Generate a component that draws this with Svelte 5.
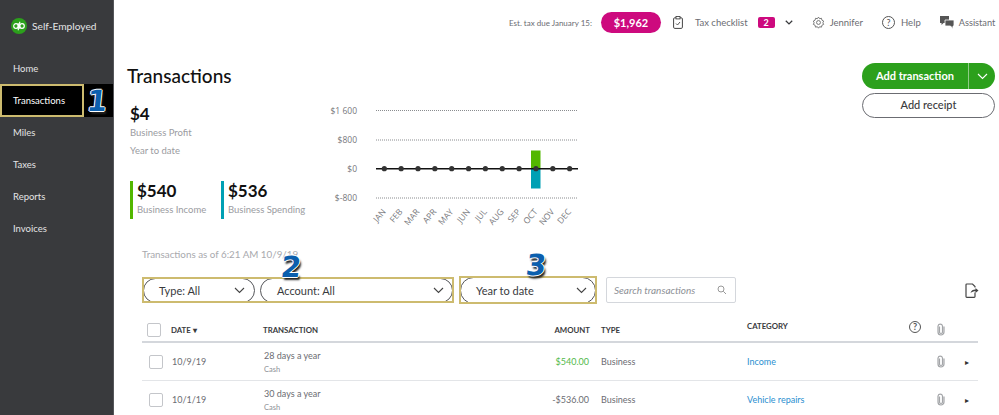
<script>
  const nav = ['Home', 'Transactions', 'Miles', 'Taxes', 'Reports', 'Invoices'];
  const months = ['JAN', 'FEB', 'MAR', 'APR', 'MAY', 'JUN', 'JUL', 'AUG', 'SEP', 'OCT', 'NOV', 'DEC'];
  const gridLines = [
    { label: '$1 600', y: 20.5 },
    { label: '$800', y: 50 },
    { label: '$-800', y: 108 }
  ];
  const rows = [
    { date: '10/9/19', name: '28 days a year', amount: '$540.00', income: true, category: 'Income' },
    { date: '10/1/19', name: '30 days a year', amount: '-$536.00', income: false, category: 'Vehicle repairs' }
  ];
  const monthX = (i) => 64.3 + i * 16.85;
</script>

{#snippet chevron(color = '#444', width = 1.1)}
  <svg class="chev" width="11" height="7" viewBox="0 0 11 7"><path d="M1 1l4.500 4.500L10 1" fill="none" stroke={color} stroke-width={width} /></svg>
{/snippet}

{#snippet clip()}
  <svg width="8" height="13" viewBox="0 0 8 13"><path d="M2.500 3.500v5.500a1.500 1.500 0 0 0 3 0V3a2.300 2.300 0 0 0-4.500 0v6a3 3 0 0 0 6 0V3.500" fill="none" stroke="#a3a5a8" stroke-width="1.200" /></svg>
{/snippet}

<div class="page">
  <aside class="sidebar">
    <div class="brand">
      <svg width="16" height="16" viewBox="0 0 16 16">
        <circle cx="8" cy="8" r="8" fill="#2ca01c" />
        <g fill="none" stroke="#fff" stroke-width="1.200">
          <circle cx="5" cy="8" r="2.300" />
          <path d="M7.300 5.200V12.200" />
          <circle cx="11" cy="8" r="2.300" />
          <path d="M8.700 3.800V10.800" />
        </g>
      </svg>
      <span>Self-Employed</span>
    </div>
    <nav>
      {#each nav as item}
        {#if item === 'Transactions'}
          <div class="nav-active">
            <a href="#top" class="nav-item boxed">{item}</a>
            <span class="marker one">1</span>
          </div>
        {:else}
          <a href="#top" class="nav-item">{item}</a>
        {/if}
      {/each}
    </nav>
  </aside>

  <main>
    <header class="topbar">
      <span class="due">Est. tax due January 15:</span>
      <span class="tax-pill">$1,962</span>
      <svg class="board" width="10" height="13" viewBox="0 0 10 13"><rect x="0.600" y="1.800" width="8.800" height="10.600" rx="1.200" fill="none" stroke="#444" /><rect x="3" y="0.500" width="4" height="2.400" fill="#fff" stroke="#444" stroke-width="0.900" /><path d="M3 7.500l1.500 1.500 2.500-3" fill="none" stroke="#444" stroke-width="0.900" /></svg>
      <span class="link check">Tax checklist</span>
      <span class="badge">2</span>
      <span class="top-chev">{@render chevron('#393a3d', 1.800)}</span>
      <svg class="gear" width="13" height="13" viewBox="0 0 24 24"><path d="M12 2l2 3 3.500-.8.8 3.500 3.200 1.600-1.400 3.200 1.400 3-3.200 1.600-.8 3.500-3.500-.8-2 2.700-2-2.700-3.500.8-.8-3.500-3.200-1.600 1.400-3-1.400-3.200 3.200-1.600.8-3.500 3.500.8z" fill="none" stroke="#666" stroke-width="1.600" /><circle cx="12" cy="12" r="3.600" fill="none" stroke="#666" stroke-width="1.600" /></svg>
      <span class="link name">Jennifer</span>
      <span class="round-help">?</span>
      <span class="link help">Help</span>
      <svg class="chat" width="14" height="13" viewBox="0 0 14 13"><path d="M0 0h9v7H3.500L1.500 9V7H0z" fill="#555" /><path d="M5 4h9v6h-1v2.500L10.500 10H5z" fill="#555" stroke="#fff" stroke-width="0.800" /></svg>
      <span class="link assistant">Assistant</span>
    </header>

    <section class="hero">
      <div class="summary">
        <h1>Transactions</h1>
        <div class="profit">
          <strong>$4</strong>
          <small>Business Profit</small>
          <small>Year to date</small>
        </div>
        <div class="stats">
          <div class="stat income">
            <strong>$540</strong>
            <small>Business Income</small>
          </div>
          <div class="stat spending">
            <strong>$536</strong>
            <small>Business Spending</small>
          </div>
        </div>
      </div>

      <svg class="chart" width="270" height="148" viewBox="0 0 270 148">
        {#each gridLines as line}
          <line x1="56" x2="257" y1={line.y} y2={line.y} stroke="#8a8c8f" stroke-width="1" stroke-dasharray="1 1" />
          <text x="37" y={line.y + 3} text-anchor="end" class="axis">{line.label}</text>
        {/each}
        <text x="37" y="81.500" text-anchor="end" class="axis">$0</text>
        <rect x="211" y="60.500" width="9.500" height="18" fill="#53b700" />
        <rect x="211" y="78.500" width="9.500" height="20" fill="#00a0b4" />
        <line x1="56" x2="258" y1="78.700" y2="78.700" stroke="#111" stroke-width="1.500" />
        {#each months as month, i}
          <circle cx={monthX(i)} cy="78.700" r="2.600" fill="#333" />
          <text class="axis month" text-anchor="end" transform="translate({monthX(i) + 2} 122) rotate(-50)">{month}</text>
        {/each}
      </svg>

      <div class="actions">
        <div class="split">
          <span class="split-main">Add transaction</span>
          <span class="split-caret">{@render chevron('#fff')}</span>
        </div>
        <div class="receipt">Add receipt</div>
      </div>
    </section>

    <p class="asof">Transactions as of 6:21 AM 10/9/19</p>

    <div class="filters">
      <div class="gold first">
        <span class="select type"><span>Type: All</span>{@render chevron()}</span>
        <span class="select account"><span>Account: All</span>{@render chevron()}</span>
        <span class="marker two">2</span>
      </div>
      <div class="gold second">
        <span class="select year"><span>Year to date</span>{@render chevron()}</span>
        <span class="marker three">3</span>
      </div>
      <div class="search">
        <span>Search transactions</span>
        <svg width="10" height="10" viewBox="0 0 10 10"><circle cx="4" cy="4" r="3" fill="none" stroke="#999" /><path d="M6.300 6.300L9 9" stroke="#999" /></svg>
      </div>
      <svg class="export" width="14" height="15" viewBox="0 0 14 15"><path d="M10 9.500V13.500a.8.8 0 0 1-.8.8H1.800a.8.800 0 0 1-.8-.8V1.800a.8.800 0 0 1 .8-.8h5.700L10 3.500v1" fill="none" stroke="#444" stroke-width="1.200" /><path d="M5.500 10c.5-2.500 2.500-3.500 5-3.500V5l3 2.500-3 2.500V8.200c-2 0-3.500.5-5 1.800z" fill="#444" /></svg>
    </div>

    <div class="table">
      <div class="row head">
        <span class="box hbox"></span>
        <span class="date">DATE <i>▾</i></span>
        <span>TRANSACTION</span>
        <span class="amount">AMOUNT</span>
        <span class="type-col">TYPE</span>
        <span class="cat-col">CATEGORY</span>
        <span class="round-help small">?</span>
        <span class="clip-col">{@render clip()}</span>
        <span></span>
      </div>
      {#each rows as row}
        <div class="row item">
          <span class="box"></span>
          <span class="date">{row.date}</span>
          <span class="desc">{row.name}<small>Cash</small></span>
          <span class="amount" class:positive={row.income}>{row.amount}</span>
          <span class="type-col">Business</span>
          <a href="#top" class="cat-link">{row.category}</a>
          <span></span>
          <span class="clip-col">{@render clip()}</span>
          <span class="caret">▸</span>
        </div>
      {/each}
    </div>
  </main>
</div>

<style>
  :global(body) {
    margin: 0;
    background: #fff;
    font-family: Lato, "Open Sans", sans-serif;
    color: #393a3d;
  }

  .page {
    display: flex;
    width: 999px;
    height: 415px;
    overflow: hidden;
  }

  .sidebar {
    flex: 0 0 113px;
    background: #393a3d;
    border-right: 1px solid #55565a;
    color: #e4e4e5;
  }

  .brand {
    display: flex;
    align-items: center;
    gap: 5px;
    height: 16px;
    padding: 18px 0 0 11px;
    font-size: 10.200px;
  }

  nav {
    display: flex;
    flex-direction: column;
    margin-top: 18px;
  }

  .nav-item {
    display: flex;
    align-items: center;
    height: 32px;
    padding-left: 13px;
    font-size: 9.500px;
    color: #e4e4e5;
    text-decoration: none;
  }

  .nav-active {
    display: flex;
    align-items: center;
    height: 33px;
    margin-bottom: -1px;
    background: #000;
    position: relative;
  }

  .boxed {
    box-sizing: border-box;
    width: 84px;
    height: 33px;
    padding-left: 11px;
    border: 2px solid #cdbb6f;
    color: #fff;
  }

  .marker {
    position: absolute;
    font-family: "DejaVu Sans", sans-serif;
    font-size: 29px;
    font-weight: 700;
    line-height: 1;
    color: #0b5fae;
    transform: skewX(-6deg);
    text-shadow:
      1px 0 #fff, -1px 0 #fff, 0 1px #fff, 0 -1px #fff,
      2px 3px 2px #222;
    z-index: 2;
  }

  .one {
    left: 87px;
    top: 3px;
  }

  .two {
    left: 139px;
    top: -24px;
  }

  .three {
    left: 67px;
    top: -25px;
  }

  main {
    flex: 1;
    min-width: 0;
    position: relative;
  }

  .topbar {
    display: flex;
    align-items: center;
    height: 45px;
    white-space: nowrap;
  }

  .topbar > * {
    flex-shrink: 0;
  }

  .due {
    margin-left: 395px;
    font-size: 8px;
    color: #6b6c72;
  }

  .tax-pill {
    width: 60px;
    height: 21px;
    margin-left: 9px;
    border-radius: 11px;
    background: #cd0a7e;
    color: #fff;
    font-size: 11px;
    font-weight: 700;
    line-height: 21px;
    text-align: center;
  }

  .board {
    margin-left: 12px;
  }

  .link {
    font-size: 9.500px;
    color: #6b6c72;
  }

  .check {
    margin-left: 12px;
  }

  .badge {
    width: 17px;
    height: 11px;
    margin-left: 10px;
    border-radius: 2px;
    background: #cd0a7e;
    color: #fff;
    font-size: 9px;
    font-weight: 700;
    line-height: 11px;
    text-align: center;
  }

  .top-chev {
    display: flex;
    width: 8px;
    margin: 0 2px 0 10px;
  }

  .top-chev :global(svg) {
    width: 8px;
    height: 5px;
  }

  .gear {
    margin-left: 17px;
  }

  .name {
    margin-left: 5px;
  }

  .round-help {
    box-sizing: border-box;
    width: 13px;
    height: 13px;
    margin-left: 19px;
    border: 1px solid #555;
    border-radius: 50%;
    font-size: 9px;
    line-height: 11px;
    text-align: center;
    color: #555;
  }

  .help {
    margin-left: 6px;
  }

  .chat {
    margin-left: 19px;
  }

  .link.assistant {
    margin-left: 5px;
    font-size: 9.200px;
  }

  .hero {
    display: flex;
    height: 193px;
    align-items: flex-start;
  }

  .summary {
    flex: 0 0 206px;
    padding-left: 13px;
    box-sizing: border-box;
  }

  h1 {
    margin: 21px 0 0;
    font-size: 19px;
    line-height: 20px;
    font-weight: 500;
    color: #111;
  }

  .profit {
    display: flex;
    flex-direction: column;
    margin: 18px 0 0 3px;
  }

  strong {
    font-size: 17px;
    line-height: 20px;
    color: #111;
  }

  small {
    font-size: 9.500px;
    color: #9a9b9f;
  }

  .profit small {
    line-height: 16.500px;
    margin-top: 1px;
  }

  .stats {
    display: flex;
    margin: 22px 0 0 3px;
  }

  .stat {
    display: flex;
    flex-direction: column;
    gap: 3px;
    height: 38px;
    padding-left: 4px;
    border-left: 3px solid #53b700;
    white-space: nowrap;
  }

  .income {
    width: 84px;
  }

  .spending {
    border-color: #00a0b4;
  }

  .chart {
    flex-shrink: 0;
    margin: 45px 0 0;
  }

  .axis {
    font-family: "Open Sans", sans-serif;
    font-size: 8.500px;
    fill: #77787c;
  }

  .actions {
    display: flex;
    flex-direction: column;
    gap: 4px;
    width: 133px;
    margin: 18px 0 0 272px;
  }

  .split {
    display: flex;
    height: 26px;
    border-radius: 13px;
    background: #2ca01c;
    color: #fff;
    font-size: 11px;
    font-weight: 700;
    line-height: 26px;
  }

  .split-main {
    flex: 1;
    text-align: center;
    border-right: 1px solid #8fcc86;
  }

  .split-caret {
    display: flex;
    align-items: center;
    justify-content: center;
    width: 26px;
  }

  .receipt {
    box-sizing: border-box;
    height: 25px;
    border: 1.500px solid #6b6c72;
    border-radius: 13px;
    font-size: 11px;
    font-weight: 500;
    line-height: 22px;
    text-align: center;
  }

  .asof {
    margin: 10px 0 0 28px;
    font-size: 9.800px;
    line-height: 12px;
    color: #a8a9ad;
  }

  .filters {
    display: flex;
    align-items: center;
    height: 28px;
    margin: 16px 0 0 28px;
  }

  .gold {
    display: flex;
    align-items: center;
    position: relative;
    box-sizing: border-box;
    padding-left: 1px;
  }

  /* highlight frame painted over the pills, so only their rounded ends show */
  .gold::after {
    content: '';
    position: absolute;
    inset: 0;
    border: 2px solid #cdbb6f;
    pointer-events: none;
  }

  .first {
    width: 312px;
    height: 26px;
    gap: 5px;
  }

  .second {
    width: 138px;
    height: 28px;
    margin-left: 5px;
  }

  .select {
    display: flex;
    align-items: center;
    justify-content: space-between;
    flex-shrink: 0;
    box-sizing: border-box;
    height: 25px;
    padding: 0 8px 0 15px;
    border: 1px solid #55565a;
    border-radius: 13px;
    font-size: 11px;
  }

  .type {
    width: 112px;
    padding-right: 9px;
  }

  .account {
    width: 193px;
    padding-left: 16px;
  }

  .year {
    width: 136px;
    height: 27px;
    border-radius: 14px;
  }

  .search {
    display: flex;
    align-items: center;
    justify-content: space-between;
    box-sizing: border-box;
    width: 130px;
    height: 26px;
    margin-left: 9px;
    padding: 0 8px 0 7px;
    border: 1px solid #d4d7dc;
    border-radius: 2px;
    font-size: 10px;
    font-style: italic;
    color: #8d9096;
  }

  .export {
    margin-left: 229px;
  }

  .table {
    width: 836px;
    margin: 14px 0 0 28px;
  }

  .row {
    display: grid;
    grid-template-columns: 29px 92px 247px 80px 157px 161px 27px 28px 15px;
    align-items: center;
  }

  .head {
    height: 23px;
    border-bottom: 2px solid #d4d7dc;
    font-size: 7.800px;
    font-weight: 700;
    color: #393a3d;
  }

  .item {
    height: 37px;
    border-bottom: 1px solid #e3e5e8;
    font-size: 9px;
    color: #6b6c72;
  }

  .box {
    box-sizing: border-box;
    width: 14px;
    height: 14px;
    margin-left: 7px;
    border: 1px solid #c4c6ca;
    border-radius: 2px;
  }

  .hbox {
    margin-left: 5px;
  }

  .date i {
    font-style: normal;
    font-size: 8px;
  }

  .item .date {
    padding-left: 1px;
  }

  .desc {
    display: flex;
    flex-direction: column;
    gap: 4px;
    padding-left: 1px;
  }

  .desc small {
    font-size: 7.500px;
    color: #8d9096;
  }

  .amount {
    text-align: right;
  }

  .item .amount {
    padding-right: 1px;
  }

  .positive {
    color: #53b94a;
  }

  .type-col {
    padding-left: 11px;
  }

  .cat-col {
    margin-top: -7px;
  }

  .cat-link {
    color: #2b8fd0;
    text-decoration: none;
  }

  .round-help.small {
    margin-left: 1px;
    width: 12px;
    height: 12px;
    line-height: 10px;
    margin-top: -5px;
  }

  .clip-col {
    display: flex;
    padding-left: 2px;
  }

  .caret {
    padding-left: 2px;
    font-size: 8px;
    color: #333;
  }
</style>
